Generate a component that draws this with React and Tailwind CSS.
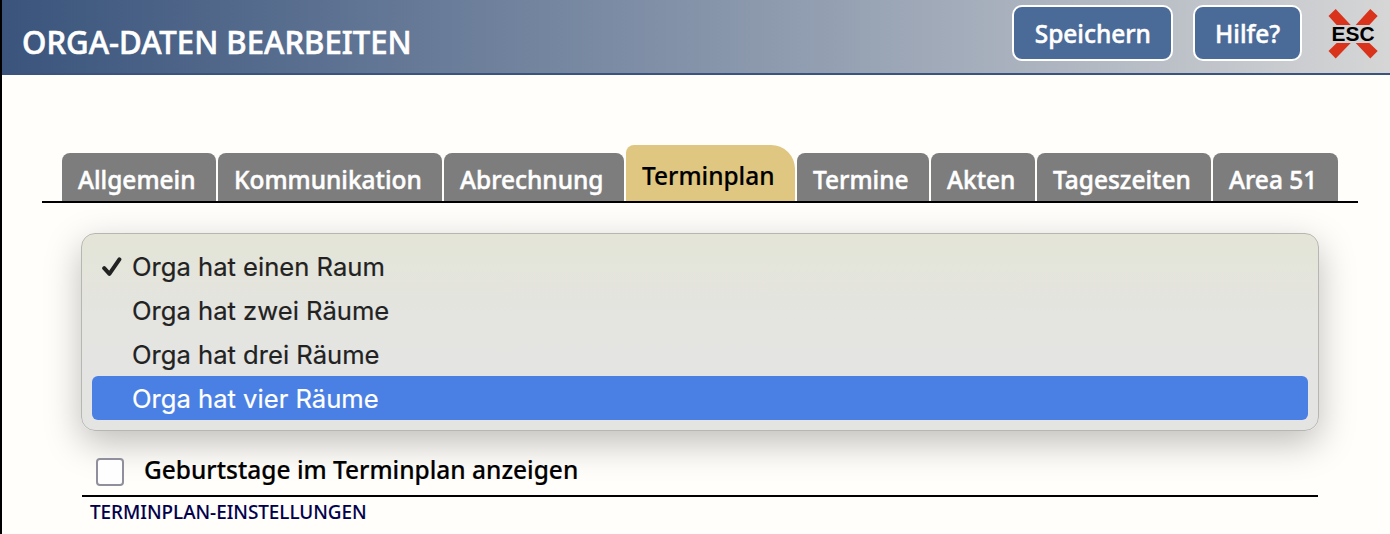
import React, { useState } from 'react';

const TABS = [
  { label: 'Allgemein', width: 'w-[154px]' },
  { label: 'Kommunikation', width: 'w-[224px]' },
  { label: 'Abrechnung', width: 'w-[180px]' },
  { label: 'Terminplan', width: 'w-[169px]' },
  { label: 'Termine', width: 'w-[132px]' },
  { label: 'Akten', width: 'w-[104px]' },
  { label: 'Tageszeiten', width: 'w-[174px]' },
  { label: 'Area 51', width: 'w-[125px]' },
];

const ROOMS = [
  'Orga hat einen Raum',
  'Orga hat zwei Räume',
  'Orga hat drei Räume',
  'Orga hat vier Räume',
];

const EscIcon = () => (
  <svg viewBox="0 0 52 52" className="w-[52px] h-[52px]">
    <path d="M1.5 8 L8.7 1 L23.7 17 H9.7 Z M50.7 8 L43.3 1 L28.7 17 H42.3 Z" fill="#d9331c" />
    <path d="M1.5 43 L8.7 50.4 L23.7 35 H9.7 Z M50.7 43 L43.3 50.4 L28.7 35 H42.3 Z" fill="#d9331c" />
    <text x="26" y="33" textAnchor="middle" textLength="43" lengthAdjust="spacingAndGlyphs" fontSize="20" fontWeight="700" fontFamily="Liberation Sans, sans-serif">ESC</text>
  </svg>
);

const HeaderButton = ({ className, children }) => (
  <button className={`h-14 rounded-[10px] border-2 border-white bg-[#4a6a98] text-[26px] leading-[52px] font-medium text-white ${className}`}>
    <span className="inline-block scale-x-94 [-webkit-text-stroke:0.5px]">{children}</span>
  </button>
);

const Tab = ({ label, width, active, onClick }) => (
  <button
    onClick={onClick}
    className={`${width} shrink-0 pl-4 text-left text-[26px] font-medium whitespace-nowrap ${
      active
        ? 'h-14 rounded-tl-lg rounded-tr-3xl bg-[#dfc681] text-black leading-[60px]'
        : 'h-12 rounded-t-lg bg-[#7d7d7d] text-white leading-[52px]'
    }`}
  >
    <span className={`inline-block origin-left scale-x-94 ${active ? '[-webkit-text-stroke:0.2px]' : '[-webkit-text-stroke:0.5px]'}`}>{label}</span>
  </button>
);

const RoomMenu = () => {
  const [selected, setSelected] = useState(0);

  return (
    <ul className="h-[198px] rounded-[14px] border border-[#b6b6b3] bg-linear-to-b from-[#e4e5d7] via-[#e4e4e1] via-45% to-[#e4e4e3] px-2.5 pt-2.5 font-['Inter',sans-serif] text-[25.6px] text-[#222] shadow-[0_12px_36px_rgba(0,0,0,0.26)]">
      {ROOMS.map((room, idx) => (
        <li
          key={room}
          onClick={() => setSelected(idx)}
          className={`flex h-11 items-center rounded-md ${idx === 3 ? 'bg-[#4a80e4] text-white' : ''}`}
        >
          <span className="flex w-10 pt-0.5 pl-2.5">
            {selected === idx && (
              <svg viewBox="0 0 20 20" className="w-5 h-5">
                <path d="M2.2 11.2 L7.4 16.8 L17.4 2.4" fill="none" stroke="#222" strokeWidth="4" strokeLinecap="round" strokeLinejoin="round" />
              </svg>
            )}
          </span>
          <span className="pt-0.5 [-webkit-text-stroke:0.2px]">{room}</span>
        </li>
      ))}
    </ul>
  );
};

const App = () => {
  const [tab, setTab] = useState('Terminplan');

  return (
    <div className="h-[534px] w-[1390px] overflow-hidden border-l-2 border-black bg-[#fffefa] font-['Noto_Sans',sans-serif] text-black">
      <header className="flex h-[75px] items-start border-b-2 border-[#3a547f] bg-linear-to-r from-[#3a547c] to-[#d6d6d6] pl-5">
        <h1 className="mt-5 flex-1 text-[32px] leading-[44px] font-medium text-white">
          <span className="inline-block origin-left scale-x-[0.972] [-webkit-text-stroke:0.6px]">ORGA-DATEN BEARBEITEN</span>
        </h1>
        <HeaderButton className="mt-[5px] w-[161px]">Speichern</HeaderButton>
        <HeaderButton className="mt-[5px] ml-5 w-[109px]">Hilfe?</HeaderButton>
        <button className="mt-2 mr-[11px] ml-[25px]"><EscIcon /></button>
      </header>

      <nav className="mt-[70px] mr-8 ml-10 flex h-[58px] items-end gap-0.5 border-b-2 border-black pl-5">
        {TABS.map((t) => (
          <Tab key={t.label} {...t} active={tab === t.label} onClick={() => setTab(t.label)} />
        ))}
      </nav>

      <main className="mt-[30px] mr-[71px] ml-[79px]">
        <RoomMenu />
        <label className="mr-px ml-px flex h-[66px] items-start border-b-2 border-black pl-3.5 text-[26px] leading-9 font-medium">
          <span className="mt-[27px] h-7 w-7 rounded border-2 border-[#8f8f9d] bg-[#fefeff]" />
          <span className="mt-5 ml-5 origin-left scale-x-[0.941] [-webkit-text-stroke:0.2px]">Geburtstage im Terminplan anzeigen</span>
        </label>
        <h2 className="ml-[9px] text-xl leading-[30px] font-medium text-[#00004d]">
          <span className="inline-block origin-left scale-x-[0.942] [-webkit-text-stroke:0.1px]">TERMINPLAN-EINSTELLUNGEN</span>
        </h2>
      </main>
    </div>
  );
};

export default App;
